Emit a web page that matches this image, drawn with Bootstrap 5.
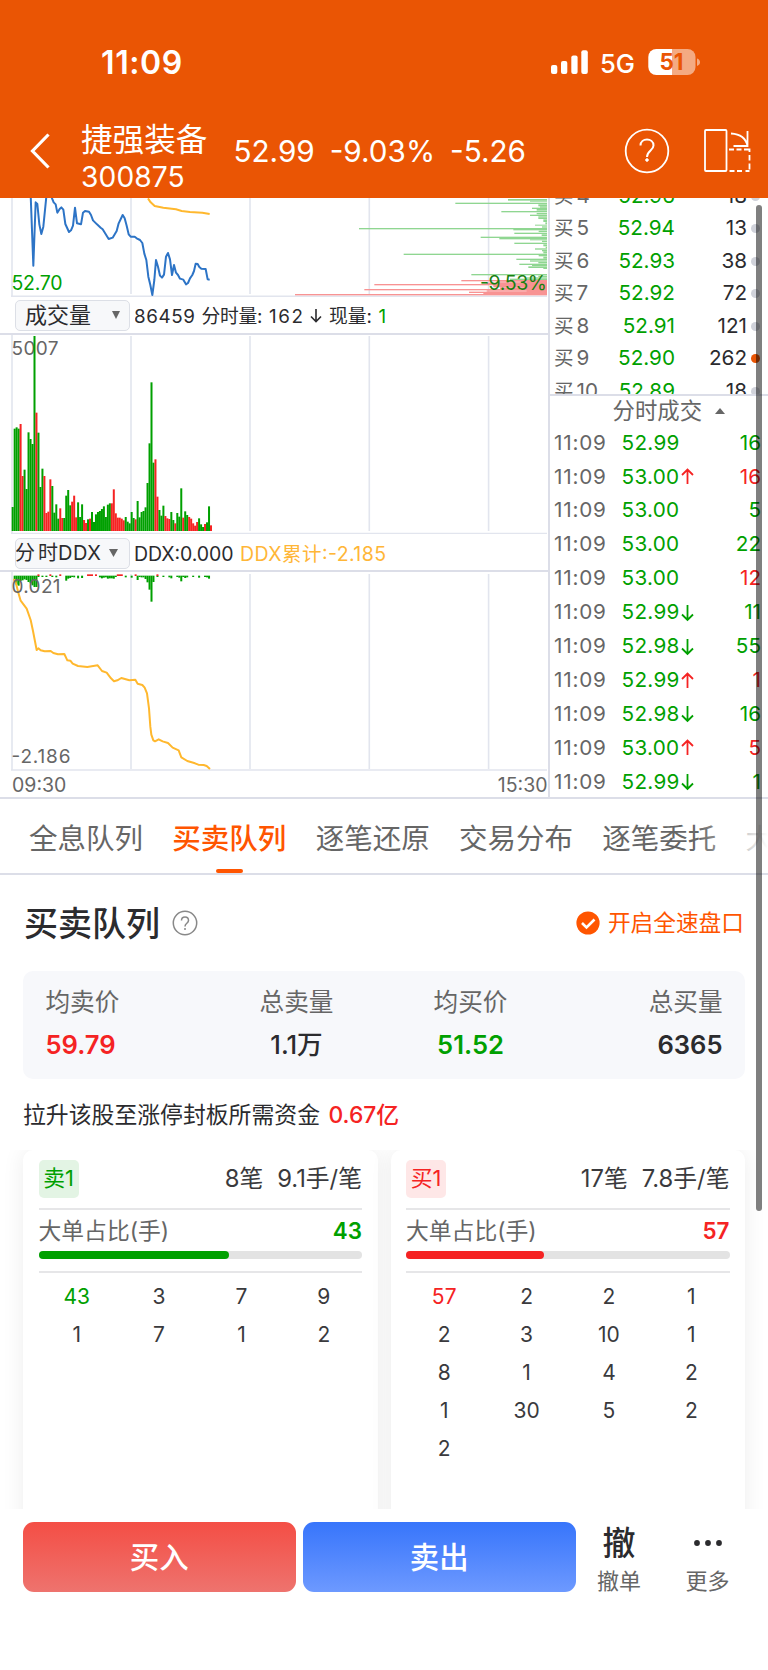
<!DOCTYPE html>
<html lang="zh-CN">
<head>
<meta charset="utf-8">
<meta name="viewport" content="width=device-width, initial-scale=1">
<title>捷强装备 300875</title>
<link rel="stylesheet" href="https://cdn.jsdelivr.net/npm/bootstrap@5.3.0/dist/css/bootstrap.min.css">
<style>
:root{--up:#f52323;--down:#00a000;--brand:#ea5504;--accent:#ff5500;--rule:#dcdee8;--ink:#2b2b2e;--mute:#666}
body{font-family:Inter,"Noto Sans CJK SC",sans-serif;color:var(--ink);background:#fff;line-height:1;width:768px;height:1670px;overflow:hidden}
svg{display:block;flex:none}
.up{color:var(--up)}.down{color:var(--down)}.mute{color:var(--mute)}
.top-area{background:var(--brand);height:198px;color:#fff}
.status-line{height:124px;padding:0 68px 0 101px}
.clock{font-size:32px;font-weight:600;letter-spacing:.6px;padding-top:2px}
.title-line{height:74px;padding:0 17px 0 30px}
.title-line>svg,.title-icons{margin-top:-20px}
.title-body{width:701px;padding-left:31px}
.stock-name{font-size:31.6px;line-height:36px;margin-top:-5px}
.stock-code{font-size:28.2px;line-height:38px;letter-spacing:.1px}
.quote-top{font-size:29.7px;gap:15px;margin:-18px 0 0 26px}
.market{height:601px;border-bottom:2px solid var(--rule)}
.charts{width:549.5px;border-right:2px solid var(--rule)}
.meta-line{height:38px;padding-left:15px;font-size:18.6px;border-bottom:2px solid var(--rule)}
.picker{width:114.5px;height:31px;background:#f7f8fa;border:1.5px solid #dcdfe6;border-radius:5px;margin-right:5.5px}
.tri{width:0;height:0;border:4.5px solid transparent;border-top:8px solid #666;border-bottom:0}
.tri-up{width:0;height:0;border:5px solid transparent;border-bottom:6px solid #666;border-top:0;margin-left:13px}
.axis{height:28px;padding:2px 0 0 12px;font-size:19.5px}
.book{height:198px;overflow:hidden;border-bottom:2px solid var(--rule)}
.book-rows{margin-top:-18px}
.book-row{height:32.5px;font-size:20.7px;padding-left:4.5px}
.pip{width:9px;height:9px;border-radius:50%;background:#d0d2da;margin-left:4px}
.pip.hot{background:var(--brand)}
.deal-head{height:30px;font-size:22.4px;padding-left:63px}
.deal-row{height:33.95px;font-size:20.7px;padding:0 7px 0 4.5px}
.deal-time{width:67.5px;letter-spacing:.8px}
.deal-price{width:59px;letter-spacing:.3px}
.tabs-line{height:76px;gap:29.3px;padding-left:29px;border-bottom:2px solid var(--rule);overflow:hidden;white-space:nowrap;font-size:28.5px}
.tabs-line::after{content:"";position:absolute;right:0;top:0;width:70px;height:74px;background:linear-gradient(90deg,rgba(255,255,255,0),#fff)}
.tab-item{position:relative;padding-top:6px}
.tab-item.on{color:var(--accent);font-weight:500}
.tab-item.on::after{content:"";position:absolute;left:44px;bottom:0;width:27px;height:4px;border-radius:2px;background:var(--accent)}
.sect{height:96px;padding:0 24px}
.sect-title{font-size:34px;font-weight:500;padding-top:1px}
.full-speed{font-size:22.7px;color:var(--accent);gap:8px}
.stats{margin:0 23px;height:108px;border-radius:10px;background:#f7f8fb;padding:0 22.5px 3px;font-size:24.6px;color:var(--mute)}
.stats>div{width:74px;white-space:nowrap}
.stat-val{font-size:25.6px;font-weight:600;margin-top:17px;height:25px;color:var(--ink)}
.stat-val.up{color:var(--up)}.stat-val.down{color:var(--down)}
.stat-val.cjk{font-weight:500}
.fund{height:71px;padding:2px 0 0 23px;font-size:22.85px}
.fund .up{font-weight:500;margin-left:8.5px}
.queues{height:359px;overflow:hidden;padding:0 23px;gap:13px}
.queue{flex:1;height:400px;border-radius:10px;box-shadow:0 0 22px rgba(0,0,0,.075);background:#fff;padding:0 15.5px}
.queue-head{height:59.5px;border-bottom:2px solid #e6e6e8;font-size:23.8px;gap:14px;color:#3a3a3d}
.tag{height:38px;width:40px;border-radius:5px;font-size:21.8px}
.tag.down{background:#e3f4e4;color:var(--down)}.tag.up{background:#fee7e7;color:var(--up)}
.big-share{height:41px;padding-top:2px;font-size:22.8px}
.big-share b{font-size:22.4px;font-weight:600}
.bar-bg{height:8px;border-radius:4px;background:#e3e3e3}
.bar-bg div{height:8px;border-radius:4px}
.split{height:14px;border-bottom:2px solid #e6e6e8}
.cells{margin:4.5px -3px 0;display:grid;grid-template-columns:repeat(4,1fr);grid-auto-rows:38.2px;font-size:21px;color:#3a3a3d}
.foot{height:161px;background:#fff;padding:13px 23px 0;gap:7.5px}
.trade{flex:none;width:272.5px;height:70px;border-radius:11px;color:#fff;font-size:29.4px;font-weight:500;padding-top:2px}
.buy{background:linear-gradient(#f44e45,#ee736e)}
.sell{background:linear-gradient(#3775fb,#6d99ff)}
.act{flex:none;width:88px;font-size:22px;color:#666;margin-left:-8px}
.act-ico{font-size:33px;font-weight:500;color:var(--ink);height:42px;margin-bottom:6px}
.thumb{position:absolute;left:756px;top:205px;width:6px;height:1006px;border-radius:3px;background:rgba(0,0,0,.5)}
svg text{font-family:Inter,"Noto Sans CJK SC",sans-serif}
</style>
</head>
<body class="position-relative">
<header class="top-area">
  <div class="status-line d-flex align-items-center justify-content-between">
    <span class="clock">11:09</span>
    <svg width="150" height="28" viewBox="550 48 150 28">
      <g fill="#fff"><rect x="551" y="65" width="6.3" height="9" rx="2"/><rect x="561" y="61" width="6.3" height="13" rx="2"/><rect x="571.3" y="55.5" width="6.3" height="18.5" rx="2"/><rect x="581.3" y="50.2" width="6.5" height="23.8" rx="2"/></g>
      <text x="600" y="72.500" font-size="26" font-weight="500" fill="#fff" textLength="35" lengthAdjust="spacingAndGlyphs">5G</text>
      <path d="M672 49h15.500a8 8 0 0 1 8 8v10a8 8 0 0 1-8 8H672z" fill="#f4aa82"/>
      <path d="M672 49h-15.700a8 8 0 0 0-8 8v10a8 8 0 0 0 8 8H672z" fill="#fff"/>
      <path d="M697 58.500q3 1 3 3.700t-3 3.700z" fill="#f4aa82"/>
      <text x="659.500" y="70" font-size="22.500" font-weight="700" fill="#ea5504" textLength="24" lengthAdjust="spacingAndGlyphs">51</text>
    </svg>
  </div>
  <div class="title-line d-flex align-items-center">
    <svg width="20" height="36" viewBox="0 0 20 36"><path d="M18.500 1.500 2.500 18l16 16.500" fill="none" stroke="#fff" stroke-width="3.200"/></svg>
    <div class="title-body d-flex align-items-center">
      <div><div class="stock-name">捷强装备</div><div class="stock-code">300875</div></div>
      <div class="d-flex quote-top"><span>52.99</span><span>-9.03%</span><span>-5.26</span></div>
      <svg class="title-icons ms-auto" width="127" height="46" viewBox="624 128 127 46" fill="none" stroke="#fff" stroke-width="1.800">
        <circle cx="647" cy="151" r="21.300"/>
        <path d="M640.500 145.500c0-8 13-8 13 0 0 5-6.500 5-6.500 11.500" stroke-width="2"/><circle cx="647" cy="160" r="1.300" fill="#fff" stroke-width="1"/>
        <rect x="705" y="130" width="21.500" height="41" rx="1"/>
        <path d="M729 149.500h5m2.500 0h5m2.500 0h5.500V152m0 3v5.500m0 3v6m0 1.500h-4m-3.500 0h-5m-2.500 0h-5"/>
        <path d="M731 133.500c9 .5 15 5 16.500 12.500M747.500 131v15h-14"/>
      </svg>
    </div>
  </div>
</header>

<section class="market d-flex">
  <div class="charts">
    <svg width="547" height="99" viewBox="0 198 547 99">
      <g stroke="#e2e5ee" stroke-width="1.600"><path d="M12 198v98M131 198v96M250 198v96M369.300 198v96M488.600 198v96M11 296.300h537"/></g>
      <g id="profile" transform="translate(280 195) scale(.33333)"></g>
      <g transform="translate(0 195) scale(.33333)" fill="none" stroke-width="6" stroke-linejoin="round">
        <path stroke="#2d74c6" d="M92 0 100 212 107 22 112 27 118 88 124 117 130 95 139 5 145-10 154 5 161 22 167 28 172 53 179 42 184 37 190 44 196 87 207 111 213 106 219 92 225 38 231 85 243 88 249 53 255 48 267 50 273 60 279 76 291 88 302 98 308 103 326 132 338 128 350 108 356 85 368 60 374 70 380 92 386 118 392 125 404 125 410 130 420 135 427 144 433 176 439 195 445 245 451 270 457 300 463 255 468 195 474 215 480 242 486 248 492 239 498 185 504 174 510 193 516 240 522 210 528 233 534 240 540 251 550 254 558 268 564 264 570 250 577 240 582 228 587 206 593 207 598 216 604 221 617 222 623 253 629 254"/>
        <path stroke="#ffb82e" d="M444 10 452 22 464 33 490 38 528 43 545 48 570 51 607 53 629 57"/>
      </g>
      <text x="11.500" y="290" font-size="19.500" fill="#00a000" textLength="51">52.70</text>
      <text x="480" y="290" font-size="19.500" fill="#198010" textLength="67">-9.53%</text>
    </svg>
    <div class="meta-line d-flex align-items-center">
      <div class="picker d-flex align-items-center justify-content-between" style="padding:0 9px"><span style="font-size:22px">成交量</span><i class="tri"></i></div>
      <svg width="260" height="30" viewBox="135 300 260 30" font-size="18.800" fill="#2b2b2e">
        <text x="134" y="322.500" textLength="61">86459</text><text x="201.500" y="322.500" textLength="61">分时量:</text><text x="269" y="322.500" textLength="34">162</text>
        <path d="M316 309v12.500m-5-5 5 5 5-5" fill="none" stroke="#2b2b2e" stroke-width="1.600"/>
        <text x="329" y="322.500" textLength="43">现量:</text><text x="378.500" y="322.500" fill="#00a000">1</text>
      </svg>
    </div>
    <svg width="547" height="199" viewBox="0 335 547 199">
      <g stroke="#e2e5ee" stroke-width="1.600"><path d="M12 335v198M131 336v195M250 336v195M369.300 336v195M488.600 336v195M11 533.500h537"/></g>
      <text x="11.500" y="355" font-size="19" fill="#666" textLength="47">5007</text>
      <g id="volume" transform="translate(0 330) scale(.33333)"></g>
    </svg>
    <div class="meta-line d-flex align-items-center" style="padding-top:3px">
      <div class="picker"><svg width="112" height="28" viewBox="17 538 112 28"><text x="16" y="559" font-size="20" fill="#2b2b2e" textLength="43">分时</text><text x="59" y="559" font-size="20" fill="#2b2b2e" textLength="43">DDX</text><path d="M110 548h9l-4.500 8z" fill="#666"/></svg></div>
      <svg width="260" height="30" viewBox="135 538 260 30" font-size="19.500"><text x="134" y="560" fill="#2b2b2e" textLength="99.500">DDX:0.000</text><text x="240" y="560" fill="#ffb637" textLength="146">DDX累计:-2.185</text></svg>
    </div>
    <svg width="547" height="199" viewBox="0 572 547 199">
      <g stroke="#e2e5ee" stroke-width="1.600"><path d="M12 572v198M131 574v195M250 574v195M369.300 574v195M488.600 574v195M11 770h537"/></g>
      <g transform="translate(0 530) scale(.33333)">
        <g id="ddx"></g>
        <path fill="none" stroke="#ffb82e" stroke-width="6" stroke-linejoin="round" d="M40 148 46 152 55 188 62 212 80 236 92 270 99 303 110 360 115 355 122 361 134 364 152 363 160 369 174 373 193 372 202 391 211 392 218 401 234 408 262 411 293 406 306 423 320 428 333 445 342 454 352 451 364 444 388 451 406 449 413 461 427 465 434 473 441 490 447 535 451 590 454 614 460 631 465 634 476 628 488 634 504 639 518 653 536 661 544 682 562 693 585 700 595 704 611 705 620 708 630 717"/>
      </g>
      <text x="11.500" y="592.500" font-size="19" fill="#666" textLength="49">0.021</text>
      <text x="11.500" y="762.500" font-size="19" fill="#666" textLength="59">-2.186</text>
    </svg>
    <div class="axis d-flex align-items-center justify-content-between mute"><span>09:30</span><span>15:30</span></div>
  </div>
  <div class="flex-fill">
    <div class="book"><div class="book-rows" id="book"></div></div>
    <div class="deal-head mute d-flex align-items-center"><span>分时成交</span><i class="tri-up"></i></div>
    <div id="deals"></div>
  </div>
</section>

<nav class="tabs-line d-flex mute position-relative">
  <span class="tab-item d-flex align-items-center">全息队列</span><span class="tab-item on d-flex align-items-center">买卖队列</span><span class="tab-item d-flex align-items-center">逐笔还原</span><span class="tab-item d-flex align-items-center">交易分布</span><span class="tab-item d-flex align-items-center">逐笔委托</span><span class="tab-item d-flex align-items-center">大单</span>
</nav>

<div class="sect d-flex align-items-center">
  <span class="sect-title">买卖队列</span>
  <svg width="26" height="26" viewBox="0 0 26 26" style="margin-left:12px" fill="none" stroke="#888" stroke-width="1.500"><circle cx="13" cy="13" r="11.700"/><path d="M9.500 10.500c0-4.700 7-4.700 7 0 0 2.800-3.500 2.800-3.500 6"/><path d="M13 18v2"/></svg>
  <div class="full-speed d-flex align-items-center ms-auto"><svg width="24" height="24" viewBox="0 0 24 24"><circle cx="12" cy="12" r="11.600" fill="#ff5500"/><path d="m6 12 4.500 4.500 8-8" fill="none" stroke="#fff" stroke-width="2.600"/></svg>开启全速盘口</div>
</div>

<div class="stats d-flex align-items-center">
  <div>均卖价<div class="stat-val up">59.79</div></div>
  <div class="d-flex flex-column align-items-center" style="margin-left:140px">总卖量<div class="stat-val cjk">1.1万</div></div>
  <div class="d-flex flex-column align-items-center" style="margin-left:100px">均买价<div class="stat-val down">51.52</div></div>
  <div class="d-flex flex-column align-items-end ms-auto">总买量<div class="stat-val">6365</div></div>
</div>
<div class="fund d-flex align-items-center"><span>拉升该股至涨停封板所需资金</span><span class="up">0.67亿</span></div>

<div class="queues d-flex">
  <div class="queue">
    <div class="queue-head d-flex align-items-center"><span class="tag down d-flex align-items-center justify-content-center">卖1</span><span class="ms-auto">8笔</span><span>9.1手/笔</span></div>
    <div class="big-share d-flex align-items-center justify-content-between mute"><span>大单占比(手)</span><b class="down">43</b></div>
    <div class="bar-bg"><div style="width:59%;background:var(--down)"></div></div>
    <div class="split"></div>
    <div class="cells" data-cells="43,3,7,9,1,7,1,2" data-tone="down"></div>
  </div>
  <div class="queue">
    <div class="queue-head d-flex align-items-center"><span class="tag up d-flex align-items-center justify-content-center">买1</span><span class="ms-auto">17笔</span><span>7.8手/笔</span></div>
    <div class="big-share d-flex align-items-center justify-content-between mute"><span>大单占比(手)</span><b class="up">57</b></div>
    <div class="bar-bg"><div style="width:42.7%;background:var(--up)"></div></div>
    <div class="split"></div>
    <div class="cells" data-cells="57,2,2,1,2,3,10,1,8,1,4,2,1,30,5,2,2" data-tone="up"></div>
  </div>
</div>

<footer class="foot d-flex position-relative">
  <div class="trade buy d-flex align-items-center justify-content-center">买入</div>
  <div class="trade sell d-flex align-items-center justify-content-center">卖出</div>
  <div class="act text-center"><div class="act-ico d-flex align-items-center justify-content-center">撤</div>撤单</div>
  <div class="act text-center" style="margin-left:-7px"><div class="act-ico d-flex align-items-center justify-content-center"><svg width="30" height="8" viewBox="0 0 30 8" fill="#2b2b2e"><circle cx="4" cy="4" r="2.900"/><circle cx="15" cy="4" r="2.900"/><circle cx="26" cy="4" r="2.900"/></svg></div>更多</div>
</footer>
<div class="thumb"></div>

<script src="https://cdn.jsdelivr.net/npm/bootstrap@5.3.0/dist/js/bootstrap.bundle.min.js"></script>
<script>
// order book
document.getElementById('book').innerHTML = [[4,'52.96',18],[5,'52.94',13],[6,'52.93',38],[7,'52.92',72],[8,'52.91',121],[9,'52.90',262],[10,'52.89',18]].map(function(r){
  return '<div class="book-row d-flex align-items-center"><span class="mute" style="width:62px"><span style="font-size:19.500px;margin-right:3px">买</span>'+r[0]+'</span><span class="down text-end" style="width:59px">'+r[1]+'</span><span class="text-end" style="width:72px">'+r[2]+'</span><i class="pip'+(r[0]===9?' hot':'')+'"></i></div>';
}).join('');
// tick list: price, arrow, lots, tone
document.getElementById('deals').innerHTML = [['52.99','',16,0],['53.00','u',16,1],['53.00','',5,0],['53.00','',22,0],['53.00','',12,1],['52.99','d',11,0],['52.98','d',55,0],['52.99','u',1,1],['52.98','d',16,0],['53.00','u',5,1],['52.99','d',1,0]].map(function(r){
  var a = r[1] ? '<svg width="13" height="18" viewBox="0 0 13 18" fill="none" stroke="currentColor" stroke-width="1.800" class="'+(r[1]==='u'?'up':'down')+'"><path d="'+(r[1]==='u'?'M6.500 16V1.500M1 7 6.500 1.500 12 7':'M6.500 1v15M1 10.500 6.500 16 12 10.500')+'"/></svg>' : '';
  return '<div class="deal-row d-flex align-items-center"><span class="mute deal-time">11:09</span><span class="down deal-price">'+r[0]+'</span>'+a+'<span class="ms-auto '+(r[3]?'up':'down')+'">'+r[2]+'</span></div>';
}).join('');
// queue cells, first one highlighted
document.querySelectorAll('[data-cells]').forEach(function(el){
  el.innerHTML = el.dataset.cells.split(',').map(function(v,i){return '<div class="d-flex align-items-center justify-content-center'+(i?'':' '+el.dataset.tone)+'">'+v+'</div>';}).join('');
});
// minute volume: top of each bar, r marks a rising minute
var vol='531 296 292 296 282r 438r 419 477 307 327 342 18 248r 308 471 416 438r 549r 545r 448r 468 548 523 566 535r 564r 564 497 480 526 515r 497r 562r 517 561 523 570r 579r 568 566r 546 576 553 546 543 537 529 561 524 520 520r 478r 550r 563r 563r 566r 571r 561 575 580 546 564 568r 513 562 546 543 532 459 340 157 398 388r 500r 540 557 527 558r 565r 567r 546 570 580r 549 560 475 563r 544 555 561r 566r 580r 587r 576r 565 583 591 582r 577 529 586r'.split(' ');
document.getElementById('volume').innerHTML = vol.map(function(s,i){
  var t=parseInt(s,10);
  return '<rect x="'+(35+i*5.95).toFixed(1)+'" y="'+t+'" width="6" height="'+(603-t)+'" fill="'+(s.slice(-1)==='r'?'#f52323':'#00a000')+'"/>';
}).join('');
// DDX per minute: [index, bottom edge]
var d=[[1,150],[2,163],[3,166],[4,152],[5,150],[6,147],[7,149],[8,155],[9,159],[10,165],[11,170],[12,170],[13,140],[15,140],[17,140],[20,140],[22,141],[27,151],[28,145],[29,143],[30,140],[31,141],[33,144],[35,143],[44,141],[45,144],[46,142],[47,141],[48,145],[49,144],[50,144],[51,145],[52,140],[57,141],[60,142],[63,149],[64,140],[65,141],[66,141],[67,146],[68,156],[69,178],[70,214],[71,155],[73,140],[76,140],[79,141],[80,144],[83,140],[84,142],[85,153],[86,140],[87,143],[88,141],[91,140],[94,142],[97,140],[98,141],[99,145]];
document.getElementById('ddx').innerHTML = d.map(function(p){return '<rect x="'+(35+p[0]*5.95).toFixed(1)+'" y="137" width="6" height="'+(p[1]-136)+'" fill="#00a000"/>';}).join('')
 + [[13,1],[19,1],[24,1],[38,3],[42,1],[53,3],[62,1],[73,1]].map(function(p){return '<rect x="'+(35+p[0]*5.95)+'" y="133" width="'+p[1]*6+'" height="5" fill="#f52323"/>';}).join('');
// price distribution: [y, left edge, height]
var g=[[12,684,5],[17,750,3],[23,526,4],[28,775,6],[34,780,4],[38,756,4],[42,770,5],[48,664,4],[54,770,4],[59,750,4],[64,775,4],[68,775,4],[73,790,8],[82,796,6],[89,765,3],[94,786,4],[99,237,4],[102,700,4],[107,776,4],[113,703,4],[118,785,5],[125,602,4],[129,658,4],[133,750,3],[137,786,4],[143,703,4],[148,790,6],[155,797,5],[160,765,4],[165,786,4],[169,790,6],[176,371,4],[180,776,4],[185,790,6],[191,709,4],[196,750,4],[201,775,4],[206,718,4],[210,756,3],[214,745,5],[219,790,3],[237,574,4],[242,775,4],[247,740,4],[251,690,4]];
var r=[[255,544,4],[259,655,4],[263,620,4],[267,283,4],[270,640,7],[277,660,5],[282,253,4],[286,620,4],[290,567,4],[294,610,3],[297,45,4],[255,740,45]];
function bars(a,c){return a.map(function(p){return '<rect x="'+p[1]+'" y="'+p[0]+'" width="'+(804-p[1])+'" height="'+p[2]+'" fill="'+c+'"/>';}).join('');}
document.getElementById('profile').innerHTML = bars(g,'#8fd691')+bars(r,'#f89393');
</script>
</body>
</html>
